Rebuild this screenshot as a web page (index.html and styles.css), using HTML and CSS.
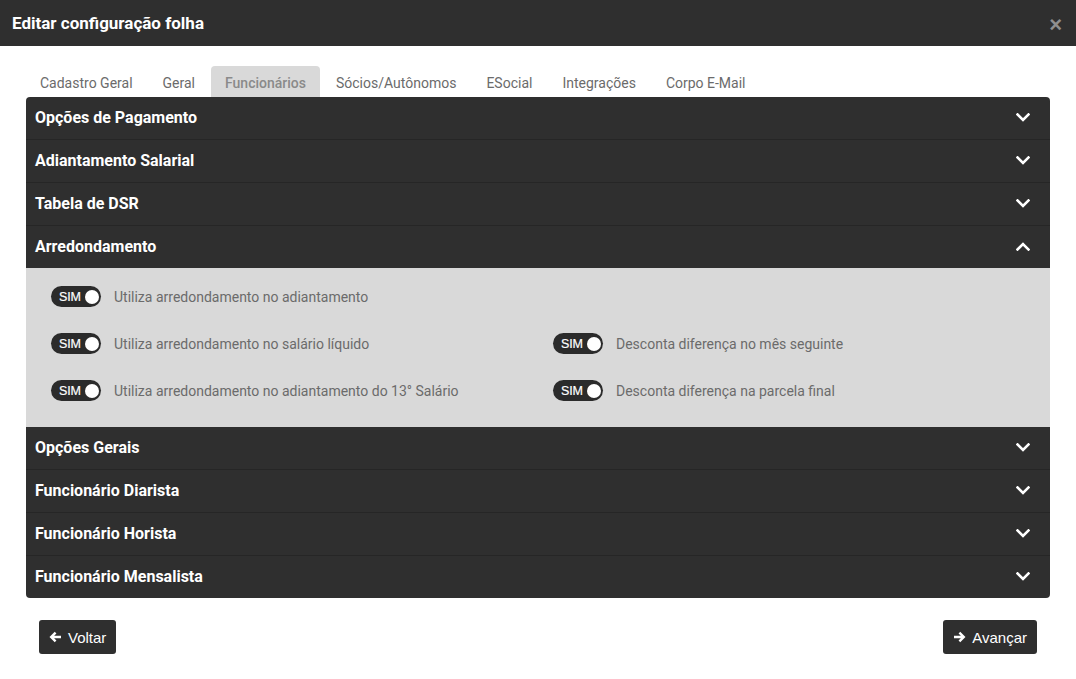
FILE: index.html
```html
<!DOCTYPE html>
<html lang="pt-BR">
<head>
<meta charset="utf-8">
<title>Editar configuração folha</title>
<link rel="stylesheet" href="styles.css">
</head>
<body>
<div class="modal">
  <div class="modal-header">
    <h1 class="modal-title">Editar configuração folha</h1>
    <span class="close">×</span>
  </div>
  <div class="modal-body">
    <nav class="tabs">
      <span class="tab">Cadastro Geral</span>
      <span class="tab">Geral</span>
      <span class="tab active">Funcionários</span>
      <span class="tab">Sócios/Autônomos</span>
      <span class="tab">ESocial</span>
      <span class="tab">Integrações</span>
      <span class="tab">Corpo E-Mail</span>
    </nav>
    <div class="accordion">
      <div class="acc-header"><span>Opções de Pagamento</span><svg class="chev" viewBox="0 0 14 9"><path d="M1.5 1.5 L7 7 L12.5 1.5"/></svg></div>
      <div class="acc-header"><span>Adiantamento Salarial</span><svg class="chev" viewBox="0 0 14 9"><path d="M1.5 1.5 L7 7 L12.5 1.5"/></svg></div>
      <div class="acc-header"><span>Tabela de DSR</span><svg class="chev" viewBox="0 0 14 9"><path d="M1.5 1.5 L7 7 L12.5 1.5"/></svg></div>
      <div class="acc-header open"><span>Arredondamento</span><svg class="chev" viewBox="0 0 14 9"><path d="M1.5 7.5 L7 2 L12.5 7.5"/></svg></div>
      <div class="acc-panel">
        <div class="opt"><span class="toggle"><span class="toggle-text">SIM</span><span class="knob"></span></span><span class="label">Utiliza arredondamento no adiantamento</span></div>
        <div></div>
        <div class="opt"><span class="toggle"><span class="toggle-text">SIM</span><span class="knob"></span></span><span class="label">Utiliza arredondamento no salário líquido</span></div>
        <div class="opt"><span class="toggle"><span class="toggle-text">SIM</span><span class="knob"></span></span><span class="label">Desconta diferença no mês seguinte</span></div>
        <div class="opt"><span class="toggle"><span class="toggle-text">SIM</span><span class="knob"></span></span><span class="label">Utiliza arredondamento no adiantamento do 13° Salário</span></div>
        <div class="opt"><span class="toggle"><span class="toggle-text">SIM</span><span class="knob"></span></span><span class="label">Desconta diferença na parcela final</span></div>
      </div>
      <div class="acc-header"><span>Opções Gerais</span><svg class="chev" viewBox="0 0 14 9"><path d="M1.5 1.5 L7 7 L12.5 1.5"/></svg></div>
      <div class="acc-header"><span>Funcionário Diarista</span><svg class="chev" viewBox="0 0 14 9"><path d="M1.5 1.5 L7 7 L12.5 1.5"/></svg></div>
      <div class="acc-header"><span>Funcionário Horista</span><svg class="chev" viewBox="0 0 14 9"><path d="M1.5 1.5 L7 7 L12.5 1.5"/></svg></div>
      <div class="acc-header last"><span>Funcionário Mensalista</span><svg class="chev" viewBox="0 0 14 9"><path d="M1.5 1.5 L7 7 L12.5 1.5"/></svg></div>
    </div>
    <div class="footer">
      <button class="btn"><svg class="arrow" viewBox="0 0 13 12"><path d="M12 6 H2.5 M6.6 1.6 L2.2 6 L6.6 10.4"/></svg>Voltar</button>
      <button class="btn"><svg class="arrow" viewBox="0 0 13 12"><path d="M1 6 H10.5 M6.4 1.6 L10.8 6 L6.4 10.4"/></svg>Avançar</button>
    </div>
  </div>
</div>
</body>
</html>
```
FILE: styles.css
```css
* { box-sizing: border-box; }
html, body { margin: 0; padding: 0; background: #fff; }
body { font-family: Roboto, "Liberation Sans", Arial, sans-serif; }

.modal-header {
  height: 46px;
  background: #2f2f2f;
  display: flex;
  align-items: center;
  justify-content: space-between;
  padding: 0 14px 0 12px;
}
.modal-title {
  margin: 0;
  font-size: 17px;
  font-weight: 700;
  color: #fff;
}
.close {
  color: #8f8f8f;
  font-family: "Liberation Sans", Arial, sans-serif;
  font-size: 22px;
  font-weight: 700;
  line-height: 1;
  margin-top: 4px;
}

.modal-body { padding: 20px 26px 0; }

.tabs { display: flex; height: 31px; }
.tab {
  padding: 0 14px;
  margin-right: 2px;
  line-height: 34px;
  font-size: 14px;
  color: #6b6b6b;
  border-radius: 4px 4px 0 0;
}
.tab.active {
  background: #d9d9d9;
  color: #8a8a8a;
  font-weight: 500;
}

.accordion {
  background: #2f2f2f;
  border-radius: 4px;
  overflow: hidden;
}
.acc-header {
  height: 43px;
  display: flex;
  align-items: center;
  justify-content: space-between;
  padding: 0 20px 1px 9px;
  border-bottom: 1px solid #262626;
  color: #fff;
  font-size: 16px;
  font-weight: 700;
}
.acc-header.open, .acc-header.last { border-bottom: none; height: 42px; }
.chev {
  width: 14px;
  height: 9px;
  fill: none;
  stroke: #fff;
  stroke-width: 2.6;
  stroke-linecap: square;
}

.acc-panel {
  background: #d9d9d9;
  padding: 18px 10px 26px;
  display: grid;
  grid-template-columns: 1fr 1fr;
  row-gap: 26px;
}
.opt {
  display: flex;
  align-items: center;
  padding: 0 15px;
  height: 21px;
}
.toggle {
  width: 50px;
  height: 21px;
  border-radius: 11px;
  background: #2b2b2b;
  display: flex;
  align-items: center;
  justify-content: space-between;
  padding: 0 2px 0 8px;
  flex-shrink: 0;
}
.toggle-text {
  color: #fff;
  font-family: "Liberation Sans", Arial, sans-serif;
  font-size: 12.5px;
  letter-spacing: -0.2px;
  -webkit-text-stroke: 0.2px #fff;
}
.knob {
  width: 14px;
  height: 14px;
  border-radius: 50%;
  background: #fff;
}
.label {
  margin-left: 13px;
  font-size: 14px;
  color: #6b6b6b;
}

.footer {
  display: flex;
  justify-content: space-between;
  padding: 22px 13px 0;
}
.btn {
  height: 34px;
  border: none;
  border-radius: 3px;
  background: #2f2f2f;
  color: #fff;
  font-family: "Liberation Sans", Arial, sans-serif;
  font-size: 15px;
  padding: 0 10px;
  display: flex;
  align-items: center;
  gap: 6px;
}
.arrow {
  width: 13px;
  height: 12px;
  fill: none;
  stroke: #fff;
  stroke-width: 2.4;
}
```
